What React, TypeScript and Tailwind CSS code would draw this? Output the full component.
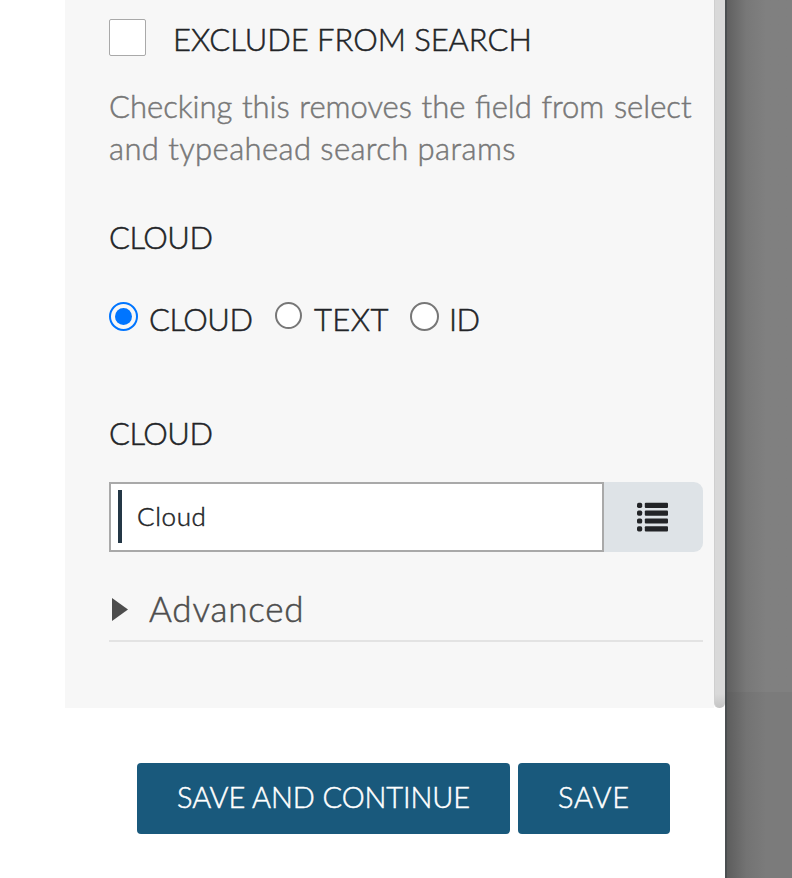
import { useState } from 'react'

const options = [
  { id: 'cloud', label: 'CLOUD', dot: 'size-[29px]', item: 'w-[165px]', gap: 'gap-[11px]', tracking: 'tracking-[-0.5px]' },
  { id: 'text', label: 'TEXT', dot: 'size-[27px]', item: 'w-[136px]', gap: 'gap-[12px] pl-px', tracking: 'tracking-[0.4px]' },
  { id: 'id', label: 'ID', dot: 'size-[29px]', item: 'w-[90px]', gap: 'gap-[10px]', tracking: 'tracking-[-0.7px]' },
]

const rows = [0.8, 8.6, 16.4, 24.2]

function ListIcon() {
  return (
    <svg width="32" height="30" viewBox="0 0 32 30" fill="#222427">
      {rows.map((y) => (
        <g key={y}>
          <rect x="0" y={y} width="5.2" height="5.2" rx="1.7" />
          <rect x="7.8" y={y} width="23.2" height="5.2" rx="1" />
        </g>
      ))}
    </svg>
  )
}

export default function App() {
  const [excluded, setExcluded] = useState(false)
  const [source, setSource] = useState('cloud')
  const [value, setValue] = useState('Cloud')

  return (
    <div className="flex h-[878px] w-[792px] overflow-hidden bg-white font-['Lato',sans-serif] text-[31px] leading-[42px] font-light whitespace-nowrap text-[#222427] [-webkit-text-stroke:0.5px_currentColor]">
      <div className="flex w-[725px] shrink-0 flex-col">
        <div className="ml-[65px] flex h-[708px] bg-[#f7f7f7]">
          <div className="w-[649px] pl-11">
            <label className="flex h-[55px] items-start pt-[19px]">
              <input
                type="checkbox"
                checked={excluded}
                onChange={() => setExcluded(!excluded)}
                className="size-[37px] shrink-0 appearance-none rounded-[2px] border border-[#a9a9a9] bg-white"
              />
              <span className="-mt-px ml-[27px] tracking-[-0.05px]">EXCLUDE FROM SEARCH</span>
            </label>

            <p className="mt-[30px] text-[#777]">
              <span className="block [word-spacing:1.2px]">Checking this removes the field from select</span>
              <span className="block tracking-[0.4px]">and typeahead search params</span>
            </p>

            <h3 className="mt-[47px] tracking-[-0.5px]">CLOUD</h3>

            <div className="mt-[40px] flex">
              {options.map((o) => (
                <label key={o.id} className={`flex items-start ${o.item} ${o.gap}`}>
                  <input
                    type="radio"
                    name="source"
                    checked={source === o.id}
                    onChange={() => setSource(o.id)}
                    className={`mt-[4px] shrink-0 appearance-none rounded-full border-2 border-[#777] bg-white p-[4px] checked:border-[#0075ff] checked:bg-[#0075ff] checked:bg-clip-content ${o.dot}`}
                  />
                  <span className={o.tracking}>{o.label}</span>
                </label>
              ))}
            </div>

            <h3 className="mt-[72px] tracking-[-0.5px]">CLOUD</h3>

            <div className="mt-[28px] flex h-[70px] w-[594px]">
              <div className="flex w-[495px] items-center border-2 border-[#a9a9a9] bg-white pl-[7px]">
                <span className="mb-px h-[53px] w-1 bg-[#243746]" />
                <input
                  value={value}
                  onChange={(e) => setValue(e.target.value)}
                  className="mb-[2px] ml-[15px] w-[400px] bg-transparent text-[26px] leading-[36px] tracking-[0.6px] outline-none"
                />
              </div>
              <button className="flex flex-1 items-center rounded-r-[9px] bg-[#dee3e7] pl-[33px]">
                <ListIcon />
              </button>
            </div>

            <div className="mt-[34px] flex h-14 w-[594px] items-start border-b-2 border-[#e3e3e3] text-[#4d4d4d]">
              <svg width="16" height="23" viewBox="0 0 16 23" className="mt-3 ml-[3px]" fill="currentColor">
                <path d="M0 0 16 11.5 0 23z" />
              </svg>
              <span className="-mt-px ml-[21px] text-[35px] leading-[46px] tracking-[0.8px]">Advanced</span>
            </div>
          </div>
          <div className="w-[11px] bg-white">
            <div className="h-full rounded-b-[5px] border-l border-[#cfcfcf] bg-linear-to-b from-[#d9d9d9] from-98% to-[#c4c4c4]" />
          </div>
        </div>

        <div className="mt-[55px] ml-[137px] flex gap-2 text-[29px] text-white">
          <button className="h-[71px] w-[373px] rounded-[4px] bg-[#19597c] pb-[3px] tracking-[-0.1px]">SAVE AND CONTINUE</button>
          <button className="h-[71px] w-[152px] rounded-[4px] bg-[#19597c] pb-[3px] tracking-[0.9px]">SAVE</button>
        </div>
      </div>

      {/* dimmed page behind the panel */}
      <div className="flex w-[67px] flex-col border-l-2 border-[#4a4e50]">
        <div className="h-[692px] bg-linear-to-r from-[#606060] via-[#787878] via-30% to-[#808080] to-60%" />
        <div className="flex-1 bg-linear-to-r from-[#5d5d5d] via-[#737373] via-30% to-[#7b7b7b] to-60%" />
      </div>
    </div>
  )
}
